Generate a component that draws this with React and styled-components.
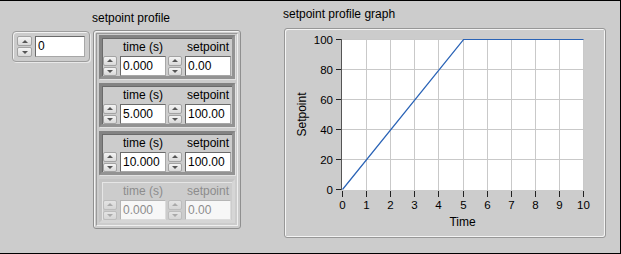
import React from "react";
import styled, {createGlobalStyle} from "styled-components";

const GlobalStyle = createGlobalStyle`
  body {
    margin: 0;
    font-family: "Liberation Sans", Arial, sans-serif;
  }
`

const Panel = styled.div`
  width: 621px;
  height: 254px;
  box-sizing: border-box;
  background: #cccccc;
  border-top: 1px solid #000;
  border-right: 1px solid #000;
  border-bottom: 1px solid #000;
`

const Row = styled.div`
  display: flex;
  align-items: flex-start;
  padding-left: 12px;
`

const Column = styled.div`
  display: flex;
  flex-direction: column;
  padding-top: ${p => p.$top}px;
  margin-left: ${p => p.$left || 0}px;
`

const Label = styled.div`
  font-size: 12px;
  line-height: 14px;
  height: 14px;
  color: #000;
  margin-bottom: ${p => p.$gap}px;
  white-space: nowrap;
`

const Bezel = styled.div`
  display: flex;
  gap: 3px;
  width: 78px;
  height: 31px;
  box-sizing: border-box;
  padding: 4px;
  border: 1px solid #9d9d9d;
  border-radius: 4px;
  box-shadow: inset 1px 1px 0 #f2f2f2, 1px 1px 0 #e9e9e9;
`

const SpinGroup = styled.div`
  display: flex;
  flex-direction: column;
  gap: 1px;
  width: ${p => p.$w}px;
  flex: none;
`

const SpinButton = styled.div`
  flex: 1;
  display: flex;
  align-items: center;
  justify-content: center;
  box-sizing: border-box;
  border: 1px solid ${p => p.$off ? "#bdbdbd" : "#a3a3a3"};
  border-radius: 2px;
  background: ${p => p.$off ? "linear-gradient(#e4e4e4, #d6d6d6)" : "linear-gradient(#f4f4f4, #d9d9d9)"};
`

const Arrow = styled.div`
  width: 0;
  height: 0;
  border-left: 3px solid transparent;
  border-right: 3px solid transparent;
  ${p => p.$down ? "border-top" : "border-bottom"}: 3px solid ${p => p.$off ? "#aaaaaa" : "#555"};
`

const NumBox = styled.div`
  flex: 1;
  box-sizing: border-box;
  height: ${p => p.$h}px;
  background: ${p => p.$off ? "#f7f7f7" : "#fff"};
  border: 1px solid;
  border-color: ${p => p.$off ? "#b5b5b5 #dcdcdc #dcdcdc #b5b5b5" : "#6a6a6a #a7a7a7 #a7a7a7 #6a6a6a"};
  padding-left: 2px;
  font-size: 12px;
  line-height: ${p => p.$h - 2}px;
  color: ${p => p.$off ? "#8c8c8c" : "#000"};
`

const ArrayFrame = styled.div`
  margin-left: 1px;
  width: 148px;
  height: 199px;
  box-sizing: border-box;
  padding: 2px;
  display: flex;
  border: 1px solid #8f8f8f;
  border-radius: 3px;
  box-shadow: inset 1px 1px 0 #f4f4f4;
`

const ArrayInner = styled.div`
  flex: 1;
  display: flex;
  flex-direction: column;
  gap: 4px;
  padding: 1px 2px;
  border: 1px solid;
  border-color: #9a9a9a #efefef #efefef #9a9a9a;
`

const Cluster = styled.div`
  display: flex;
  gap: 2px;
  height: 44px;
  box-sizing: border-box;
  padding: 0 1px;
  border: 3px solid;
  border-color: ${p => p.$off ? "#c4c4c4 #d6d6d6 #d6d6d6 #c4c4c4" : "#838383 #939393 #939393 #838383"};
  box-shadow: ${p => p.$off ? "inset 1px 1px 0 #e6e6e6" : "inset 1px 1px 0 #6a6a6a, 1px 1px 0 #e2e2e2"};
`

const Field = styled.div`
  width: 63px;
  display: flex;
  flex-direction: column;
  gap: 1px;
`

const FieldLabel = styled.div`
  height: 17px;
  line-height: 18px;
  font-size: 12px;
  padding-left: 17px;
  text-align: center;
  color: ${p => p.$off ? "#8c8c8c" : "#000"};
  white-space: nowrap;
`

const Controls = styled.div`
  display: flex;
  gap: 3px;
  height: 20px;
`

const GraphFrame = styled.div`
  margin-left: 1px;
  width: 322px;
  height: 210px;
  box-sizing: border-box;
  border: 1px solid #979797;
  border-radius: 3px;
  box-shadow: inset 1px 1px 0 #f4f4f4, inset -1px -1px 0 #f4f4f4;

  svg {
    display: block;
    font-family: "Liberation Sans", Arial, sans-serif;
  }
`

const Spin = ({w, off}) => (
  <SpinGroup $w={w}>
    <SpinButton $off={off}><Arrow $off={off}/></SpinButton>
    <SpinButton $off={off}><Arrow $off={off} $down/></SpinButton>
  </SpinGroup>
)

const profile = [
  {time: "0.000", sp: "0.00"},
  {time: "5.000", sp: "100.00"},
  {time: "10.000", sp: "100.00"},
  {time: "0.000", sp: "0.00", off: true},
]

const px = t => Math.round(342 + 24.1 * t) - 285 + 0.5
const py = v => Math.round(189 - 1.5 * v) - 29 + 0.5

const Graph = () => {
  const xs = [0, 1, 2, 3, 4, 5, 6, 7, 8, 9, 10]
  const ys = [0, 20, 40, 60, 80, 100]
  return <svg width="320" height="208">
    <rect x="57" y="10" width="242" height="151" fill="#fff"/>
    {xs.slice(1).map(t => <line key={'gx' + t} x1={px(t)} x2={px(t)} y1="10" y2="161" stroke="#c9c9c9"/>)}
    {ys.slice(1).map(v => <line key={'gy' + v} x1="57" x2="299" y1={py(v)} y2={py(v)} stroke="#c9c9c9"/>)}
    <line x1="56.5" x2="56.5" y1="10" y2="161" stroke="#555"/>
    {ys.map(v => <g key={'ty' + v}>
      <line x1="51" x2="56" y1={py(v)} y2={py(v)} stroke="#222"/>
      <text x="48" y={py(v) + 4} fontSize="11.5" textAnchor="end" fill="#000">{v}</text>
    </g>)}
    {xs.map(t => <g key={'tx' + t}>
      <line x1={px(t)} x2={px(t)} y1="162" y2="168" stroke="#222"/>
      <text x={px(t)} y="180" fontSize="11.5" textAnchor="middle" fill="#000">{t}</text>
    </g>)}
    <polyline points={`${px(0)},${py(0)} ${px(5)},${py(100)} ${px(10)},${py(100)}`} fill="none" stroke="#2a63b6" strokeWidth="1.2"/>
    <text x="177.5" y="197" fontSize="12" textAnchor="middle" fill="#000">Time</text>
    <text transform="translate(21 85.5) rotate(-90)" fontSize="12" textAnchor="middle" fill="#000">Setpoint</text>
  </svg>
}

export default function App() {
  return <>
    <GlobalStyle/>
    <Panel>
      <Row>
        <Column $top={30}>
          <Bezel>
            <Spin w={15}/>
            <NumBox $h={21}>0</NumBox>
          </Bezel>
        </Column>
        <Column $top={10} $left={2}>
          <Label $gap={5}>setpoint profile</Label>
          <ArrayFrame>
            <ArrayInner>
              {profile.map((e, i) => <Cluster key={i} $off={e.off}>
                <Field>
                  <FieldLabel $off={e.off}>time (s)</FieldLabel>
                  <Controls>
                    <Spin w={14} off={e.off}/>
                    <NumBox $h={20} $off={e.off}>{e.time}</NumBox>
                  </Controls>
                </Field>
                <Field>
                  <FieldLabel $off={e.off}>setpoint</FieldLabel>
                  <Controls>
                    <Spin w={14} off={e.off}/>
                    <NumBox $h={20} $off={e.off}>{e.sp}</NumBox>
                  </Controls>
                </Field>
              </Cluster>)}
            </ArrayInner>
          </ArrayFrame>
        </Column>
        <Column $top={6} $left={42}>
          <Label $gap={7}>setpoint profile graph</Label>
          <GraphFrame>
            <Graph/>
          </GraphFrame>
        </Column>
      </Row>
    </Panel>
  </>
}
